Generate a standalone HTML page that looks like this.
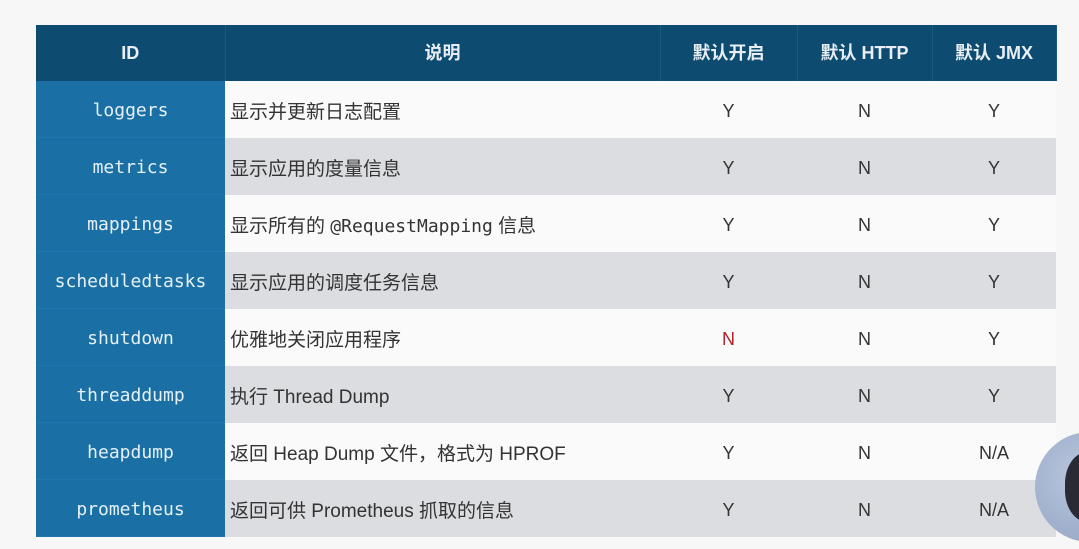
<!DOCTYPE html>
<html><head><meta charset="utf-8"><style>
body{margin:0;width:1079px;height:549px;background:#f7f7f7;overflow:hidden;position:relative;font-family:"Liberation Sans","Noto Sans CJK SC",sans-serif;}
table{position:absolute;left:36px;top:25px;border-collapse:collapse;width:1020px;table-layout:fixed;}
th{background:#0d4b70;color:#e8eef3;height:56px;font-size:18px;font-weight:bold;text-align:center;border-right:1px solid #1a5a80;padding:0;line-height:20px}
td{height:53px;padding:3px 0 0 0;font-size:18px;color:#333;text-align:center;line-height:20px;border-bottom:1px solid transparent;vertical-align:middle}
td.id{background:#1a70a5;color:#e6f0f7;font-family:"DejaVu Sans Mono","Liberation Mono",monospace;font-size:18px;border-bottom:1px solid #1e78ad}
td.d{text-align:left;padding:8px 0 0 5px;height:48px;font-size:19px}
tr.g td:not(.id){background:#dcdde1;border-bottom-color:#dcdde1}
tr.w td:not(.id){background:#fafafa;border-bottom-color:#fafafa}
.av{position:absolute;left:1035px;top:432px;width:110px;height:110px;border-radius:50%;background:radial-gradient(circle at 40% 40%,#b9c6dc,#8fa1c2);overflow:hidden}
.av::after{content:"";position:absolute;left:30px;top:20px;width:50px;height:70px;border-radius:45%;background:#2a2a35}
</style></head><body>
<table>
<colgroup><col style="width:189px"><col style="width:435px"><col style="width:137px"><col style="width:135px"><col style="width:124px"></colgroup>
<tr><th>ID</th><th>说明</th><th>默认开启</th><th>默认 HTTP</th><th>默认 JMX</th></tr>
<tr class="w"><td class="id">loggers</td><td class="d">显示并更新日志配置</td><td>Y</td><td>N</td><td>Y</td></tr>
<tr class="g"><td class="id">metrics</td><td class="d">显示应用的度量信息</td><td>Y</td><td>N</td><td>Y</td></tr>
<tr class="w"><td class="id">mappings</td><td class="d">显示所有的 <span style="font-family:'DejaVu Sans Mono',monospace;font-size:18px">@RequestMapping</span> 信息</td><td>Y</td><td>N</td><td>Y</td></tr>
<tr class="g"><td class="id">scheduledtasks</td><td class="d">显示应用的调度任务信息</td><td>Y</td><td>N</td><td>Y</td></tr>
<tr class="w"><td class="id">shutdown</td><td class="d">优雅地关闭应用程序</td><td style="color:#b0202a">N</td><td>N</td><td>Y</td></tr>
<tr class="g"><td class="id">threaddump</td><td class="d">执行 Thread Dump</td><td>Y</td><td>N</td><td>Y</td></tr>
<tr class="w"><td class="id">heapdump</td><td class="d">返回 Heap Dump 文件，格式为 HPROF</td><td>Y</td><td>N</td><td>N/A</td></tr>
<tr class="g"><td class="id">prometheus</td><td class="d">返回可供 Prometheus 抓取的信息</td><td>Y</td><td>N</td><td>N/A</td></tr>
</table>
<div class="av"></div>
</body></html>
